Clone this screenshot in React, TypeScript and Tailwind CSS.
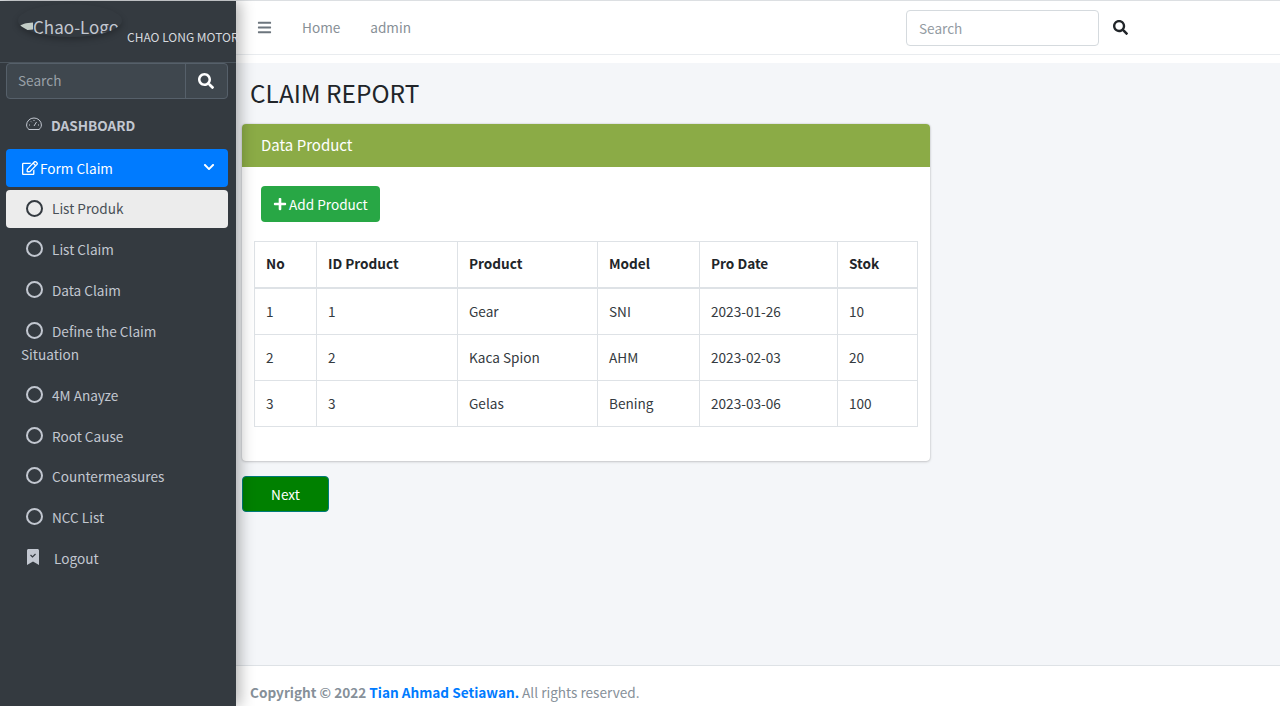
import { FaSearch, FaBars, FaPlus, FaChevronDown, FaRegEdit } from 'react-icons/fa'

const subItems = ['List Claim', 'Data Claim', 'Define the Claim', '4M Anayze', 'Root Cause', 'Countermeasures', 'NCC List']

const columns = [
  { label: 'No', width: 'w-[62px]' },
  { label: 'ID Product', width: 'w-[141px]' },
  { label: 'Product', width: 'w-[140px]' },
  { label: 'Model', width: 'w-[102px]' },
  { label: 'Pro Date', width: 'w-[138px]' },
  { label: 'Stok', width: 'w-[80px]' },
]

const rows = [
  ['1', '1', 'Gear', 'SNI', '2023-01-26', '10'],
  ['2', '2', 'Kaca Spion', 'AHM', '2023-02-03', '20'],
  ['3', '3', 'Gelas', 'Bening', '2023-03-06', '100'],
]

function Sidebar() {
  return (
    <aside className="relative z-10 flex h-full w-[236px] shrink-0 flex-col bg-[#343a40] text-[13.6px] shadow-[4px_0_14px_rgba(0,0,0,0.3)]">
      <div className="flex h-[62px] shrink-0 border-b border-[#4b545c] pl-[18px]">
        <div className="mt-[3px] flex h-[33px] w-[104px] shrink-0 overflow-hidden rounded-[50%] pt-[13px] shadow-[0_3px_6px_rgba(0,0,0,0.25)]">
          <svg viewBox="0 0 15 16" className="h-[16px] w-[15px] shrink-0">
            <path d="M1 10C3 7 8 6 15 5.500V12.500C9 13.500 3 13 1 10z" fill="#c3cdc7" />
          </svg>
          <span className="whitespace-nowrap text-[17px] leading-[20px] text-[#c2c7d0]">Chao-Logo</span>
        </div>
        <span className="ml-[5px] mt-[26px] whitespace-nowrap text-[12px] leading-[20px] text-[#d6d9de]">CHAO LONG MOTOR</span>
      </div>

      <div className="ml-[6px] mr-[8px] flex h-[36px] shrink-0 rounded-[4px] border border-[#56606a] bg-[#3f474e]">
        <span className="flex-1 pl-[11px] leading-[33px] text-[#9aa1a8]">Search</span>
        <span className="flex w-[42px] items-center justify-center border-l border-[#56606a]">
          <FaSearch size={16} className="mb-[1px] mr-[2px] text-white" />
        </span>
      </div>

      <div className="mt-[16px] flex h-[20px] items-center pl-[26px] text-[#c2c7d0]">
        <svg viewBox="0 0 16 14" className="mb-[3px] h-[14px] w-[16px]" fill="none" stroke="currentColor" strokeWidth="1">
          <path d="M3 12.500C1.500 11.500.6 9.700.6 8a7.400 7 0 0 1 14.800 0c0 1.700-.9 3.500-2.400 4.500z" />
          <path d="M8 9l2.500-4M3 8h1M12 8h1M5 4.500l.7.7M8 3v1" />
        </svg>
        <span className="ml-[9px] font-bold">DASHBOARD</span>
      </div>

      <div className="ml-[6px] mr-[8px] mt-[14px] flex h-[38px] shrink-0 items-center rounded-[4px] bg-[#007bff] pl-[16px] pr-[13px] text-white">
        <FaRegEdit size={16} className="shrink-0" />
        <span className="ml-[2px] flex-1">Form Claim</span>
        <FaChevronDown size={12} className="mb-[2px]" />
      </div>

      <div className="ml-[6px] mr-[8px] mt-[3px] flex h-[38px] shrink-0 items-center rounded-[4px] bg-[#ececec] pl-[20px] text-[#495057]">
        <span className="mb-[1px] h-[17px] w-[17px] rounded-full border-2 border-[#343a40]" />
        <span className="ml-[9px] mb-[1px]">List Produk</span>
      </div>

      <ul className="mt-[1px] text-[#c2c7d0]">
        {subItems.map((item) => (
          <li key={item} className="px-[21px] py-[9px] leading-[22.9px]">
            <span className="ml-[5px] mr-[9px] inline-block h-[17px] w-[17px] rounded-full border-2 border-[#c2c7d0] align-[-2px]" />
            {item}
            {item === 'Define the Claim' && <div>Situation</div>}
          </li>
        ))}
        <li className="flex items-center px-[27px] py-[9px] leading-[22.9px]">
          <svg viewBox="0 0 12 16" className="mb-[4px] h-[16px] w-[12px]" fill="#c2c7d0">
            <path d="M0 1.500C0 .7.7 0 1.500 0h9c.8 0 1.500.7 1.500 1.500V16l-6-3.500L0 16z" />
            <path d="M3.500 6l2 2 3-3" fill="none" stroke="#343a40" strokeWidth="1.200" />
          </svg>
          <span className="ml-[15px]">Logout</span>
        </li>
      </ul>
    </aside>
  )
}

function Navbar() {
  return (
    <nav className="flex h-[54px] shrink-0 items-center border-b border-[#e9ecef] bg-white text-[13.6px]">
      <FaBars size={15} className="ml-[21px] text-[#6c757d]" />
      <span className="ml-[30px] text-[#878f96]">Home</span>
      <span className="ml-[30px] text-[#878f96]">admin</span>
      <div className="ml-[495px] flex h-[36px] w-[193px] items-center rounded-[4px] border border-[#d5dade] pl-[12px] pt-[1px] text-[#939ba2]">
        Search
      </div>
      <FaSearch size={15} className="ml-[14px] text-[#212529]" />
    </nav>
  )
}

function ProductTable() {
  return (
    <table className="w-[663px] table-fixed border-collapse text-[13.6px] text-[#343a40]">
      <thead>
        <tr>
          {columns.map((col) => (
            <th key={col.label} className={`${col.width} h-[46px] border border-b-2 border-[#dee2e6] px-[11px] pb-[2px] text-left font-bold text-[#212529]`}>
              {col.label}
            </th>
          ))}
        </tr>
      </thead>
      <tbody>
        {rows.map((row, r) => (
          <tr key={row[0]}>
            {row.map((cell, i) => (
              <td key={i} className={`${r === 0 ? 'h-[47px]' : 'h-[46px]'} border border-[#dee2e6] px-[11px] pb-[1px]`}>
                {cell}
              </td>
            ))}
          </tr>
        ))}
      </tbody>
    </table>
  )
}

export default function App() {
  return (
    <div className="flex h-[706px] w-[1280px] flex-col overflow-hidden bg-white font-['Noto_Sans_CJK_SC',sans-serif]">
      <div className="h-[1px] shrink-0 bg-[#dcdfe2]" />
      <div className="flex min-h-0 flex-1">
        <Sidebar />
        <div className="flex min-w-0 flex-1 flex-col">
          <Navbar />
          <div className="h-[8px] shrink-0 bg-white" />
          <main className="min-h-0 flex-1 bg-[#f4f6f9] pl-[6px]">
            <h1 className="ml-[8px] mt-[13px] text-[24.4px] leading-[34px] text-[#212529]">CLAIM REPORT</h1>
            <section className="mt-[14px] w-[688px] overflow-hidden rounded-[4px] bg-white shadow-[0_0_2px_rgba(0,0,0,0.2),0_1px_3px_rgba(0,0,0,0.15)]">
              <div className="flex h-[43px] items-center bg-[#8bab46] pl-[19px] text-[15px] text-white">Data Product</div>
              <div className="px-[12px] pb-[34px] pt-[19px]">
                <button className="ml-[7px] flex h-[36px] w-[119px] items-center whitespace-nowrap rounded-[4px] bg-[#28a745] pl-[12px] text-[13.6px] text-white">
                  <FaPlus size={14} />
                  <span className="ml-[2px]">Add Product</span>
                </button>
                <div className="mt-[19px]">
                  <ProductTable />
                </div>
              </div>
            </section>
            <button className="mt-[15px] h-[36px] w-[87px] rounded-[4px] border border-[#007b7b] bg-[#008000] text-[13.6px] text-white">
              Next
            </button>
          </main>
          <footer className="h-[41px] shrink-0 border-t border-[#dee2e6] bg-white pl-[14px] pt-[14px] text-[13.6px] leading-[24px] text-[#869099]">
            <b>Copyright © 2022 <span className="text-[#007bff]">Tian Ahmad Setiawan.</span></b> All rights reserved.
          </footer>
        </div>
      </div>
    </div>
  )
}
